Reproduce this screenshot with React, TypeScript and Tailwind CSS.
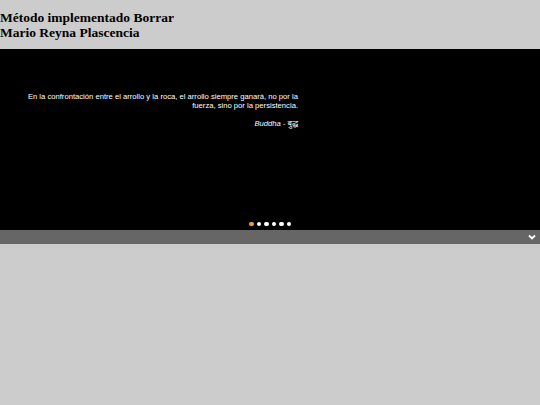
import React from "react";

export default function App() {
  const dots = [0, 1, 2, 3, 4, 5];
  return (
    <div className="w-[540px] h-[405px] bg-[#cccccc] overflow-hidden" style={{ fontFamily: '"Liberation Sans", Arial, sans-serif' }}>
      <div className="h-[49px] pt-[10px] text-black font-bold text-[13.5px] leading-[15px]" style={{ fontFamily: '"Liberation Serif", "Times New Roman", serif' }}>
        <div>Método implementado Borrar</div>
        <div>Mario Reyna Plascencia</div>
      </div>
      <div className="h-[181px] bg-black flex flex-col">
        <div className="ml-[24px] w-[274px] mt-[43px] text-right text-white text-[7.65px] leading-[9px]">
          <p>En la confrontación entre el arrollo y la roca, el arrollo siempre ganará, no por la fuerza, sino por la persistencia.</p>
          <p className="italic mt-[9px]">Buddha - <span style={{ fontFamily: '"Noto Sans", "Noto Sans Devanagari", sans-serif' }}>बुद्ध</span></p>
        </div>
        <div className="mt-auto mb-[4px] flex justify-center gap-[3px]">
          {dots.map((i) => (
            <span key={i} className={`w-[4.5px] h-[4.5px] rounded-full ${i === 0 ? "bg-[#e8a33d]" : "bg-white"}`} />
          ))}
        </div>
      </div>
      <div className="h-[14px] bg-[#666666] flex items-center justify-end pr-[4px]">
        <svg width="8" height="6" viewBox="0 0 8 6" fill="none">
          <path d="M1 1.5 L4 4.5 L7 1.5" stroke="white" strokeWidth="1.8" />
        </svg>
      </div>
    </div>
  );
}
